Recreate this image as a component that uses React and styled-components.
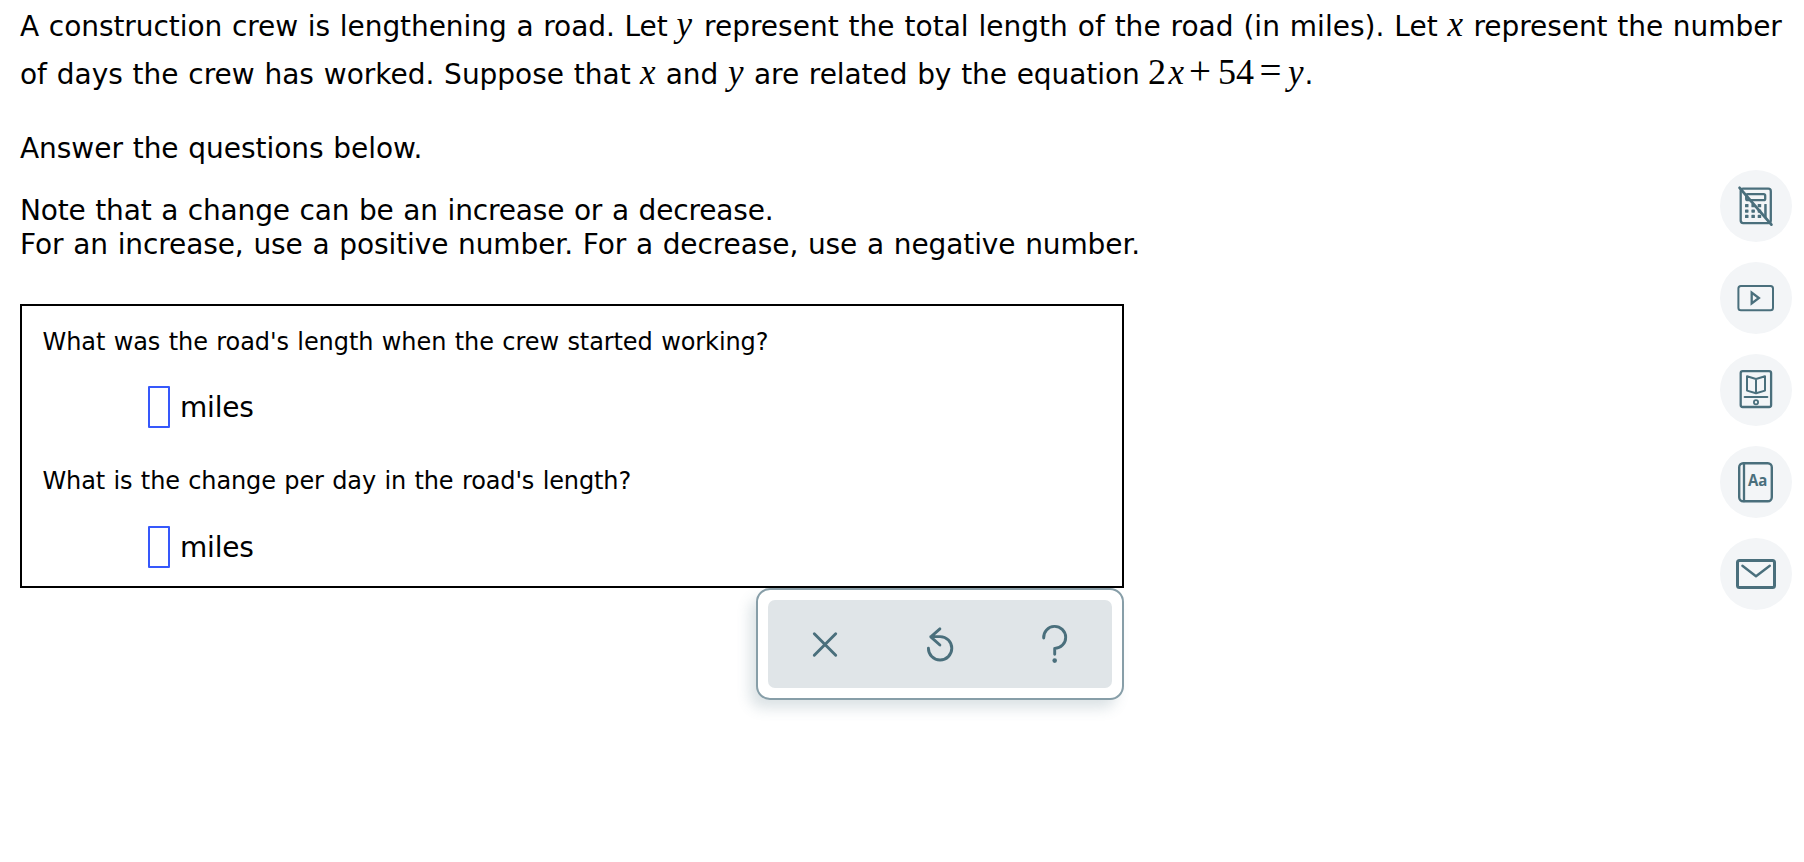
import React from "react";
import styled, { createGlobalStyle } from "styled-components";

const GlobalStyle = createGlobalStyle`
  body {
    margin: 0;
    background-color: #fff;
    color: #000;
    font-family: Verdana, "DejaVu Sans", sans-serif;
  }
`;

const PageBlock = styled.div`
  display: flex;
  justify-content: space-between;
  box-sizing: border-box;
  min-height: 862px;
  padding: 3px 12px 0 20px;
`;

const ProblemBlock = styled.main`
  width: 1104px;
  font-size: 28px;
`;

const Line = styled.div`
  display: grid;
  grid-template-columns: ${({ columns }) => columns};
  align-items: baseline;
  height: 48px;
  line-height: 48px;
  white-space: pre;
`;

const Text = styled.span`
  letter-spacing: ${({ spacing }) => spacing || 0}px;
  word-spacing: 0.95px;
`;

const MathText = styled.span`
  font-family: "Times New Roman", "Liberation Serif", serif;
  font-size: 36px;
  line-height: 1;
`;

const Operator = styled(MathText)`
  font-size: 39px;
`;

const Variable = styled(MathText)`
  font-size: 35px;
  font-style: italic;
`;

const Paragraph = styled.p`
  margin: ${({ top }) => top}px 0 0;
  line-height: 34px;
  white-space: nowrap;
`;

const AnswerBox = styled.section`
  box-sizing: border-box;
  height: 284px;
  margin-top: 42px;
  padding: 21px 0 0 20.5px;
  border: 2px solid #000;
`;

const Question = styled.div`
  margin-bottom: ${({ bottom }) => bottom}px;
  font-size: 24px;
  line-height: 30px;
`;

const AnswerRow = styled.div`
  display: flex;
  align-items: center;
  gap: 10px;
  height: 42px;
  margin: 0 0 38px 105.5px;
`;

const AnswerInput = styled.input`
  box-sizing: border-box;
  width: 22px;
  height: 42px;
  padding: 0;
  border: 2px solid #3658fb;
  border-radius: 1px;
  outline: none;
  background: #fff;
`;

const Toolbar = styled.div`
  box-sizing: border-box;
  width: 368px;
  height: 112px;
  margin-left: auto;
  padding: 10px;
  border: 2px solid #879ea8;
  border-radius: 14px;
  background-color: #fff;
  box-shadow: -7px 9px 14px -1px rgba(75, 112, 125, 0.2);
`;

const ToolbarPanel = styled.div`
  display: flex;
  height: 100%;
  border-radius: 7px;
  background-color: #e0e5e8;
`;

const IconButton = styled.button`
  display: flex;
  align-items: center;
  justify-content: center;
  padding: 0;
  border: none;
  background: none;
  color: #4a6f7c;

  svg {
    display: block;
    fill: none;
    stroke: currentColor;
    stroke-linecap: round;
    stroke-linejoin: round;
  }
`;

const ToolbarButton = styled(IconButton)`
  flex: 1;

  svg {
    width: 40px;
    height: 40px;
    stroke-width: 2.9;
    overflow: visible;
  }
`;

const SideMenu = styled.nav`
  display: flex;
  flex-direction: column;
  gap: 20px;
  margin-top: 167px;
`;

const SideButton = styled(IconButton)`
  width: 72px;
  height: 72px;
  border-radius: 50%;
  background-color: #f3f5f7;

  svg {
    width: 72px;
    height: 72px;
    stroke-width: 2.3;
  }
`;

const CalculatorOffIcon = () => (
  <svg viewBox="0 0 72 72">
    <rect x="20.7" y="18.7" width="30.1" height="34.4" rx="2.5" />
    <rect x="26.2" y="24.2" width="19" height="6" rx="1.5" />
    <g fill="currentColor" stroke="none">
      {[34, 39.4, 44.8].map((y) =>
        [25, 31.4, 37.7].map((x) => (
          <rect key={`${x}-${y}`} x={x} y={y} width="3.5" height="3.3" rx="0.6" />
        ))
      )}
      <rect x="44.2" y="34" width="2.5" height="14.1" rx="0.6" />
    </g>
    <path d="M19.6 17.8 51.4 54.6" strokeWidth="2.8" />
  </svg>
);

const VideoIcon = () => (
  <svg viewBox="0 0 72 72">
    <rect x="18.4" y="24.1" width="34.6" height="24.1" rx="2.5" strokeWidth="2" />
    <path d="M31.7 30.6v10.8l7.2-5.4z" strokeLinejoin="miter" />
  </svg>
);

const EbookIcon = () => (
  <svg viewBox="0 0 72 72">
    <rect x="20.7" y="17.1" width="30.4" height="35.9" rx="2" />
    <path d="M27 22.3 36 25l9-2.7v14.3l-9 2.7-9-2.7zM36 25v14.3" strokeWidth="2" />
    <path d="M24.6 43H47.4" strokeWidth="2" />
    <circle cx="36" cy="48.2" r="2.1" strokeWidth="1.8" />
  </svg>
);

const DictionaryIcon = () => (
  <svg viewBox="0 0 72 72">
    <rect x="19.2" y="17.2" width="32.6" height="38" rx="4" strokeWidth="2.4" />
    <path d="M24 17.2v38" />
    <text
      x="28"
      y="40"
      fill="currentColor"
      stroke="none"
      fontFamily="Open Sans, sans-serif"
      fontSize="15.5"
      fontWeight="700"
      textLength="19.4"
      lengthAdjust="spacingAndGlyphs"
    >
      Aa
    </text>
  </svg>
);

const MailIcon = () => (
  <svg viewBox="0 0 72 72">
    <rect x="17.5" y="22.5" width="37" height="27" rx="2" strokeWidth="3" />
    <path d="M22.4 27.8 36 38.3 49.8 27.8" strokeWidth="2.4" />
  </svg>
);

const ClearIcon = () => (
  <svg viewBox="0 0 40 40">
    <path d="m9.3 9.8 21.4 21.4M30.7 9.8 9.3 31.2" />
  </svg>
);

const UndoIcon = () => (
  <svg viewBox="0 0 40 40">
    <path d="M8.4 24.2A11.7 11.7 0 1 0 20.1 12.6H10.8M19.9 4.9 10.8 12.8 19.9 21" />
  </svg>
);

const HelpIcon = () => (
  <svg viewBox="0 0 40 40">
    <path d="M8.7 14A11 11 0 1 1 19.7 24.4V30.2" />
    <circle cx="19.7" cy="36.6" r="2.3" fill="currentColor" stroke="none" />
  </svg>
);

const sideItems = [
  { name: "Calculator unavailable", Icon: CalculatorOffIcon },
  { name: "Video", Icon: VideoIcon },
  { name: "eBook", Icon: EbookIcon },
  { name: "Dictionary", Icon: DictionaryIcon },
  { name: "Message", Icon: MailIcon },
];

const toolbarItems = [
  { name: "Clear", Icon: ClearIcon },
  { name: "Undo", Icon: UndoIcon },
  { name: "Help", Icon: HelpIcon },
];

const Answer = ({ label }) => (
  <AnswerRow>
    <AnswerInput aria-label={label} />
    <Text spacing={-0.2}>miles</Text>
  </AnswerRow>
);

const App = () => {
  return (
    <>
      <GlobalStyle />
      <PageBlock>
        <ProblemBlock>
          <Line columns="656.5px 27.5px 743.5px 26px auto">
            <Text spacing={-0.07}>A construction crew is lengthening a road. Let</Text>
            <Variable>y</Variable>
            <Text spacing={0.02}>represent the total length of the road (in miles). Let</Text>
            <Variable>x</Variable>
            <Text spacing={-0.06}>represent the number</Text>
          </Line>
          <Line columns="620px 25.7px 62.3px 26px 394px 20.5px 20.5px 29px 41.5px 28.5px 16.5px auto">
            <Text spacing={-0.02}>of days the crew has worked. Suppose that</Text>
            <Variable>x</Variable>
            <Text>and</Text>
            <Variable>y</Variable>
            <Text spacing={-0.07}>are related by the equation</Text>
            <MathText>2</MathText>
            <Variable>x</Variable>
            <Operator>+</Operator>
            <MathText>54</MathText>
            <Operator>=</Operator>
            <Variable>y</Variable>
            <Text>.</Text>
          </Line>
          <Paragraph top={33}>
            <Text spacing={-0.04}>Answer the questions below.</Text>
          </Paragraph>
          <Paragraph top={28}>
            <Text spacing={-0.17}>Note that a change can be an increase or a decrease.</Text>
            <br />
            <Text spacing={-0.1}>
              For an increase, use a positive number. For a decrease, use a negative number.
            </Text>
          </Paragraph>
          <AnswerBox>
            <Question bottom={29}>
              <Text spacing={-0.09}>What was the road's length when the crew started working?</Text>
            </Question>
            <Answer label="Starting length" />
            <Question bottom={30}>
              <Text spacing={-0.13}>What is the change per day in the road's length?</Text>
            </Question>
            <Answer label="Change per day" />
          </AnswerBox>
          <Toolbar>
            <ToolbarPanel>
              {toolbarItems.map(({ name, Icon }) => (
                <ToolbarButton key={name} aria-label={name}>
                  <Icon />
                </ToolbarButton>
              ))}
            </ToolbarPanel>
          </Toolbar>
        </ProblemBlock>
        <SideMenu>
          {sideItems.map(({ name, Icon }) => (
            <SideButton key={name} aria-label={name}>
              <Icon />
            </SideButton>
          ))}
        </SideMenu>
      </PageBlock>
    </>
  );
};

export default App;
